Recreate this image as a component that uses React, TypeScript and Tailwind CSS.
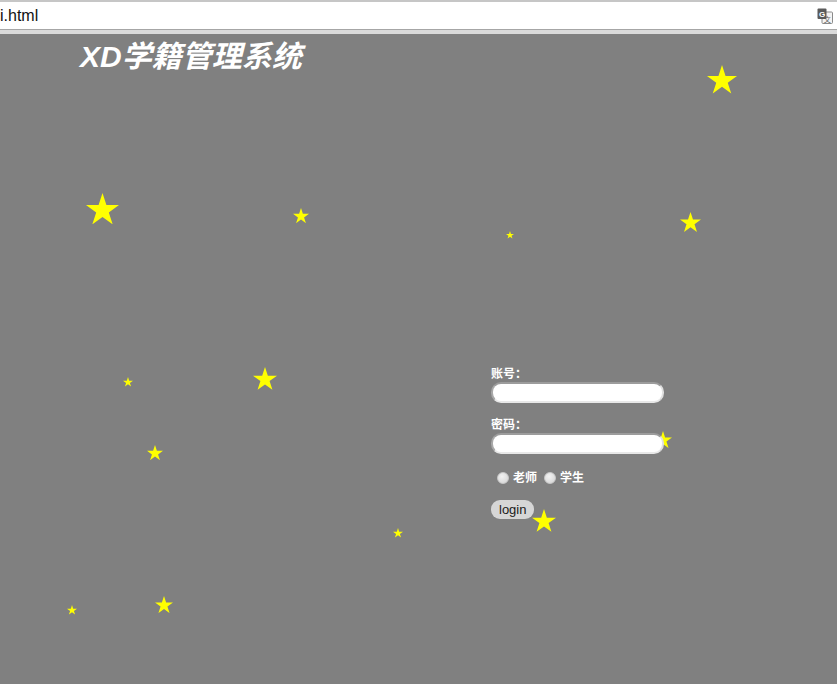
import { useState } from 'react';

interface Star {
  x: number;
  y: number;
  size: number;
}

// stars scattered over the page, window coordinates
const stars: Star[] = [
  { x: 707, y: 65, size: 30 },
  { x: 86, y: 193, size: 33 },
  { x: 293, y: 208, size: 16 },
  { x: 506, y: 231, size: 8 },
  { x: 680, y: 212, size: 21 },
  { x: 123, y: 377, size: 10 },
  { x: 253, y: 367, size: 24 },
  { x: 147, y: 445, size: 16 },
  { x: 654, y: 431, size: 18 },
  { x: 393, y: 528, size: 10 },
  { x: 532, y: 509, size: 24 },
  { x: 67, y: 605, size: 10 },
  { x: 155, y: 596, size: 18 },
];

function StarShape({ x, y, size }: Star) {
  return (
    <svg
      className="absolute"
      style={{ left: x, top: y, width: size, height: size * 0.95 }}
      viewBox="0 0 100 95"
    >
      <polygon
        points="50,0 61.8,36.3 100,36.3 69.1,58.8 80.9,95.1 50,72.6 19.1,95.1 30.9,58.8 0,36.3 38.2,36.3"
        fill="#ffff00"
      />
    </svg>
  );
}

function TranslateIcon() {
  return (
    <svg width="16" height="16" viewBox="0 0 16 16">
      <rect x="5" y="4" width="10.5" height="11.5" rx="1" fill="#f4f4f4" stroke="#8a8a8a" />
      <text x="10.2" y="13.5" fontSize="7" textAnchor="middle" fill="#666" fontFamily="Noto Sans CJK SC, sans-serif">
        文
      </text>
      <rect x="0.5" y="0.5" width="9" height="10.5" rx="1" fill="#5a5a5a" />
      <text x="5" y="8.8" fontSize="8" fontWeight="bold" textAnchor="middle" fill="#fff" fontFamily="Liberation Sans, sans-serif">
        G
      </text>
    </svg>
  );
}

function RadioOption({ label, checked, onChange }: { label: string; checked: boolean; onChange: () => void }) {
  return (
    <label className="flex items-center">
      <input
        type="radio"
        name="role"
        checked={checked}
        onChange={onChange}
        className="appearance-none w-[12px] h-[12px] rounded-full border border-[#c8c8c8] bg-[radial-gradient(circle_at_40%_35%,#f2f2f2,#d2d2d2)] m-0"
      />
      <span className="ml-[4px]">{label}</span>
    </label>
  );
}

export default function App() {
  const [role, setRole] = useState('');

  return (
    <div className="relative w-[837px] h-[684px] overflow-hidden bg-[#808080]">
      {/* browser bar */}
      <div className="h-[2px] bg-[#c6c6c6]" />
      <div className="h-[27px] bg-white flex items-center justify-between pr-[4px]">
        <span className="text-[16px] text-[#111] font-['Liberation_Sans',sans-serif]">i.html</span>
        <TranslateIcon />
      </div>
      <div className="h-[1px] bg-[#a6a6a6]" />
      <div className="h-[4px] bg-[#dadada]" />

      {stars.map((s, i) => (
        <StarShape key={i} {...s} />
      ))}

      <div className="relative z-10 text-white font-['Liberation_Sans','Noto_Sans_CJK_SC',sans-serif]">
        <h1 className="pl-[80px] pt-[5px] text-[30px] leading-[36px] font-bold italic">XD学籍管理系统</h1>

        <form className="ml-[491px] mt-[292px] w-[173px] text-[12px] font-bold" onSubmit={(e) => e.preventDefault()}>
          <div className="leading-[15px]">账号：</div>
          <input
            type="text"
            className="block w-[173px] h-[21px] rounded-[10px] bg-white border-2 border-t-[#9c9c9c] border-l-[#a8a8a8] border-b-[#e8e8e8] border-r-[#e0e0e0] outline-none"
          />
          <div className="leading-[15px] mt-[15px]">密码：</div>
          <input
            type="password"
            className="block w-[173px] h-[21px] rounded-[10px] bg-white border-2 border-t-[#9c9c9c] border-l-[#a8a8a8] border-b-[#e8e8e8] border-r-[#e0e0e0] outline-none"
          />
          <div className="flex items-center gap-[7px] h-[18px] mt-[15px] pl-[6px]">
            <RadioOption label="老师" checked={role === 'teacher'} onChange={() => setRole('teacher')} />
            <RadioOption label="学生" checked={role === 'student'} onChange={() => setRole('student')} />
          </div>
          <button
            type="submit"
            className="mt-[13px] h-[19px] px-[8px] rounded-[9px] bg-[#d6d6d6] text-[13px] leading-[19px] font-normal text-[#1a1a1a]"
          >
            login
          </button>
        </form>
      </div>
    </div>
  );
}
